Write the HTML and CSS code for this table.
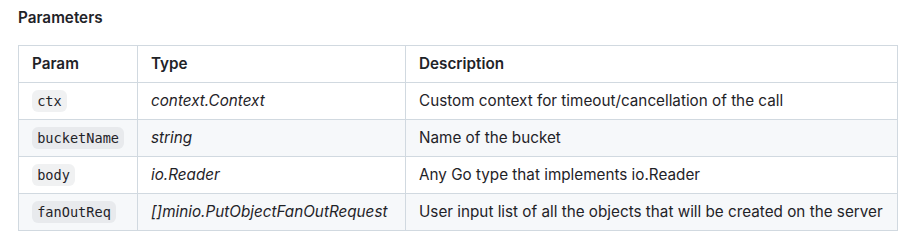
FILE: index.html
```
<!DOCTYPE html>
<html lang="en">
<head>
    <meta charset="UTF-8">
    <meta name="viewport" content="width=device-width, initial-scale=1.0">
    <title>Parameters</title>
    <link rel="stylesheet" href="styles.css">
</head>
<body>
    <main class="markdown-body">
        <h4>Parameters</h4>
        <table class="param-table">
            <colgroup>
                <col class="col-param">
                <col class="col-type">
                <col class="col-desc">
            </colgroup>
            <thead>
                <tr>
                    <th>Param</th>
                    <th>Type</th>
                    <th>Description</th>
                </tr>
            </thead>
            <tbody>
                <tr>
                    <td><code>ctx</code></td>
                    <td><em>context.Context</em></td>
                    <td>Custom context for timeout/cancellation of the call</td>
                </tr>
                <tr>
                    <td><code>bucketName</code></td>
                    <td><em>string</em></td>
                    <td>Name of the bucket</td>
                </tr>
                <tr>
                    <td><code>body</code></td>
                    <td><em>io.Reader</em></td>
                    <td>Any Go type that implements io.Reader</td>
                </tr>
                <tr>
                    <td><code>fanOutReq</code></td>
                    <td><em>[]minio.PutObjectFanOutRequest</em></td>
                    <td>User input list of all the objects that will be created on the server</td>
                </tr>
            </tbody>
        </table>
    </main>
</body>
</html>
```
FILE: styles.css
```
body {
    margin: 0;
    padding: 0;
    background-color: #ffffff;
    color: #1f2328;
    font-family: Inter, "Liberation Sans", sans-serif;
    font-size: 15.25px;
}

.markdown-body {
    padding: 8px 14px 0 18px;
}

.markdown-body h4 {
    margin: 0 0 17px 0;
    font-size: 15.25px;
    line-height: 20px;
    font-weight: 600;
}

.param-table {
    border-collapse: collapse;
    border-spacing: 0;
    width: 880px;
    table-layout: fixed;
}

.col-param {
    width: 119px;
}

.col-type {
    width: 268px;
}

.param-table th,
.param-table td {
    border: 1px solid #d1d9e0;
    padding: 6px 13px;
    height: 24px;
    line-height: 24px;
    text-align: left;
    white-space: nowrap;
}

.param-table th {
    font-weight: 600;
}

.param-table tbody tr:nth-child(2n) {
    background-color: #f6f8fa;
}

.param-table em {
    font-style: italic;
}

.param-table code {
    font-family: "DejaVu Sans Mono", "Liberation Mono", monospace;
    font-size: 13.6px;
    line-height: 1;
    padding: 0.25em 0.38em;
    background-color: rgba(129, 139, 152, 0.12);
    border-radius: 6px;
}
```
